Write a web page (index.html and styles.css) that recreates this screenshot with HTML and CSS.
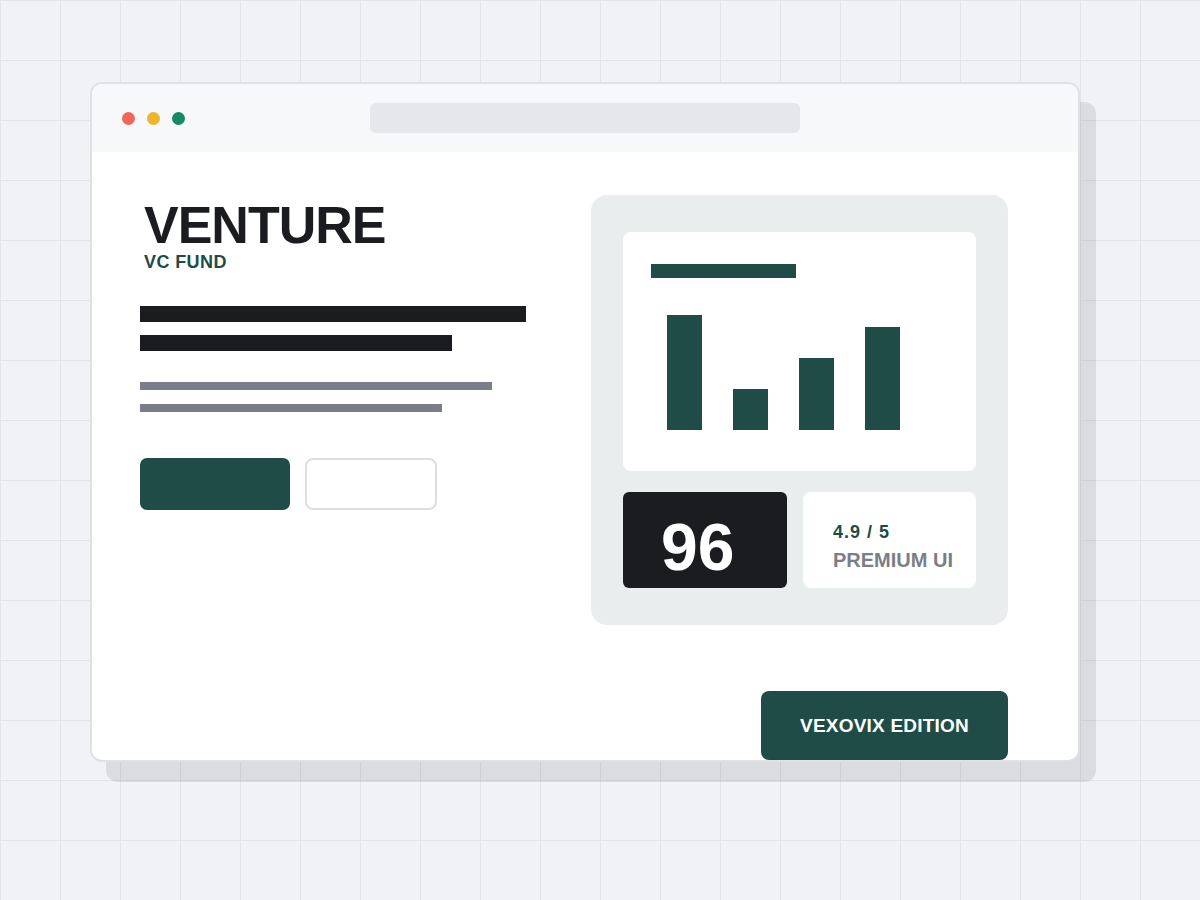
FILE: index.html
```html
<!DOCTYPE html>
<html lang="en">
<head>
  <meta charset="utf-8">
  <title>Venture — VC Fund</title>
  <link rel="stylesheet" href="styles.css">
</head>
<body>
  <div class="window">
    <header class="titlebar">
      <div class="dots">
        <span class="dot dot-red"></span>
        <span class="dot dot-yellow"></span>
        <span class="dot dot-green"></span>
      </div>
      <div class="address"></div>
    </header>

    <main class="content">
      <section class="intro">
        <h1 class="brand">VENTURE</h1>
        <p class="tagline">VC FUND</p>

        <div class="copy">
          <span class="line line-dark line-1"></span>
          <span class="line line-dark line-2"></span>
          <span class="line line-muted line-3"></span>
          <span class="line line-muted line-4"></span>
        </div>

        <div class="actions">
          <span class="btn btn-primary"></span>
          <span class="btn btn-outline"></span>
        </div>
      </section>

      <aside class="panel">
        <div class="chart-card">
          <div class="chart-title"></div>
          <div class="chart-bars">
            <span class="chart-bar" style="height:115px"></span>
            <span class="chart-bar" style="height:41px"></span>
            <span class="chart-bar" style="height:72px"></span>
            <span class="chart-bar" style="height:103px"></span>
          </div>
        </div>

        <div class="stats">
          <div class="score">96</div>
          <div class="rating">
            <span class="rating-value">4.9 / 5</span>
            <span class="rating-label">PREMIUM UI</span>
          </div>
        </div>
      </aside>
    </main>

    <footer class="window-footer">
      <span class="edition">VEXOVIX EDITION</span>
    </footer>
  </div>
</body>
</html>
```

FILE: styles.css
```css
html, body {
  height: 100%;
}

body {
  margin: 0;
  box-sizing: border-box;
  padding: 82px 0 0 90px;
  font-family: "Liberation Sans", Arial, sans-serif;
  background-color: #f1f2f6;
  background-image:
    linear-gradient(to right, #e2e4e9 1px, transparent 1px),
    linear-gradient(to bottom, #e2e4e9 1px, transparent 1px);
  background-size: 60px 60px;
}

/* Browser window */
.window {
  box-sizing: border-box;
  width: 990px;
  height: 680px;
  display: flex;
  flex-direction: column;
  background: #ffffff;
  border: 2px solid #dfe1e6;
  border-radius: 12px;
  overflow: hidden;
  box-shadow: 16px 20px 0 rgba(0, 0, 0, 0.09);
}

.titlebar {
  height: 68px;
  flex: none;
  display: grid;
  grid-template-columns: 1fr 430px 1fr;
  align-items: center;
  background: #f7f8fa;
}

.dots {
  display: flex;
  gap: 12px;
  padding-left: 30px;
}

.dot {
  width: 13px;
  height: 13px;
  border-radius: 50%;
}

.dot-red { background: #f0675a; }
.dot-yellow { background: #f0b429; }
.dot-green { background: #138a64; }

.address {
  height: 30px;
  border-radius: 6px;
  background: #e5e7eb;
}

/* Page body */
.content {
  display: flex;
  justify-content: space-between;
  align-items: flex-start;
  padding: 43px 70px 0 48px;
}

.intro {
  display: flex;
  flex-direction: column;
  align-items: flex-start;
  padding-top: 5px;
}

.brand {
  margin: 0 0 0 4px;
  font-size: 52px;
  line-height: 50px;
  font-weight: 700;
  letter-spacing: -1px;
  color: #1b1c20;
}

.tagline {
  margin: 2px 0 0 4px;
  font-size: 18px;
  line-height: 21px;
  font-weight: 700;
  letter-spacing: 0.4px;
  color: #1f4c47;
}

.copy {
  display: flex;
  flex-direction: column;
  align-items: flex-start;
  margin-top: 33px;
}

.line {
  display: block;
}

.line-dark {
  height: 16px;
  background: #1b1c20;
}

.line-muted {
  height: 8px;
  background: #7b7e88;
}

.line-1 { width: 386px; }
.line-2 { width: 312px; margin-top: 13px; }
.line-3 { width: 352px; margin-top: 31px; }
.line-4 { width: 302px; margin-top: 14px; }

.actions {
  display: flex;
  gap: 15px;
  margin-top: 46px;
}

.btn {
  box-sizing: border-box;
  height: 52px;
  border-radius: 7px;
}

.btn-primary {
  width: 150px;
  background: #1f4c47;
}

.btn-outline {
  width: 132px;
  border: 2px solid #dcdee4;
  border-radius: 8px;
  background: #ffffff;
}

/* Dashboard panel */
.panel {
  box-sizing: border-box;
  width: 417px;
  height: 430px;
  padding: 37px 32px;
  border-radius: 16px;
  background: #e9edee;
}

.chart-card {
  box-sizing: border-box;
  height: 239px;
  padding: 32px 28px 0;
  border-radius: 8px;
  background: #ffffff;
}

.chart-title {
  width: 145px;
  height: 14px;
  background: #1f4c47;
}

.chart-bars {
  display: flex;
  align-items: flex-end;
  gap: 31px;
  height: 115px;
  margin-top: 37px;
  padding-left: 16px;
}

.chart-bar {
  width: 35px;
  background: #1f4c47;
}

.stats {
  display: flex;
  gap: 16px;
  margin-top: 21px;
}

.score {
  box-sizing: border-box;
  width: 164px;
  height: 96px;
  padding: 22px 0 0 38px;
  border-radius: 6px;
  background: #1b1c20;
  color: #ffffff;
  font-size: 66px;
  line-height: 1;
  font-weight: 700;
}

.rating {
  box-sizing: border-box;
  flex: 1;
  height: 96px;
  display: flex;
  flex-direction: column;
  padding: 30px 0 0 30px;
  border-radius: 8px;
  background: #ffffff;
  font-weight: 700;
}

.rating-value {
  font-size: 18px;
  line-height: 21px;
  letter-spacing: 1px;
  color: #1f4c47;
}

.rating-label {
  margin-top: 6px;
  font-size: 20px;
  line-height: 23px;
  color: #7b7e88;
}

/* Footer badge */
.window-footer {
  margin-top: auto;
  display: flex;
  justify-content: flex-end;
  padding-right: 70px;
}

.edition {
  width: 247px;
  height: 69px;
  display: flex;
  align-items: center;
  justify-content: center;
  border-radius: 8px;
  background: #1f4c47;
  color: #ffffff;
  font-size: 19px;
  font-weight: 700;
  letter-spacing: 0.2px;
}
```
